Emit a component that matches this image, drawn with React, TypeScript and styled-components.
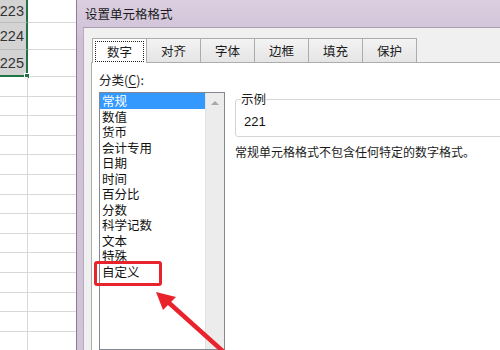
import React from "react";
import styled, { createGlobalStyle } from "styled-components";

const GlobalStyle = createGlobalStyle`
  html, body {
    margin: 0;
    padding: 0;
    background: #fff;
    overflow: hidden;
  }
  body {
    font-family: "Noto Sans CJK SC", "Noto Sans", sans-serif;
  }
`;

const Screen = styled.div`
  position: relative;
  display: flex;
  width: 500px;
  height: 350px;
  overflow: hidden;
  background: #fff;
`;

/* ---------- spreadsheet behind the dialog ---------- */

const Sheet = styled.div`
  width: 76px;
  flex-shrink: 0;
  display: flex;
  flex-direction: column;
`;

const SheetRow = styled.div<{ $h: number }>`
  display: flex;
  flex-shrink: 0;
  height: ${(p) => p.$h}px;
`;

const Cell = styled.div<{ $selected?: boolean; $last?: boolean }>`
  position: relative;
  box-sizing: border-box;
  width: 28px;
  display: flex;
  align-items: center;
  justify-content: flex-end;
  padding-right: 2px;
  font-family: "Liberation Sans", Arial, sans-serif;
  font-size: 14.5px;
  color: #333;
  background: ${(p) => (p.$selected ? "#d3d3d3" : "#fff")};
  border-right: ${(p) => (p.$selected ? "2px solid #217346" : "1px solid #d8d8d8")};
  border-bottom: ${(p) =>
    p.$last ? "2px solid #217346" : p.$selected ? "1px solid #bdbdbd" : "1px solid #d8d8d8"};
`;

const WideCell = styled.div`
  flex: 1;
  box-sizing: border-box;
  border-bottom: 1px solid #d8d8d8;
`;

const FillHandle = styled.span`
  position: absolute;
  right: -4px;
  bottom: -4px;
  width: 6px;
  height: 6px;
  background: #217346;
  border: 1px solid #fff;
  box-sizing: border-box;
`;

/* ---------- dialog ---------- */

const Dialog = styled.section`
  flex: 1;
  display: flex;
  flex-direction: column;
  background: linear-gradient(#dccfe1, #cfc0d6 40px, #d2c4d8);
  border-left: 1px solid #8c7d95;
`;

const TitleBar = styled.div`
  height: 27px;
  flex-shrink: 0;
  display: flex;
  align-items: center;
  padding-left: 8px;
  font-size: 12.5px;
  color: #1b1b1b;
`;

const Body = styled.div`
  flex: 1;
  display: flex;
  flex-direction: column;
  margin-left: 6px;
  padding: 10px 0 0 7px;
  background: #f0f0f0;
  border-top: 1px solid #a99dae;
  border-left: 1px solid #b6abbc;
`;

const TabStrip = styled.div`
  display: flex;
  align-items: flex-end;
  height: 24px;
  padding-left: 1px;
`;

const Tab = styled.div<{ $active?: boolean }>`
  position: relative;
  z-index: ${(p) => (p.$active ? 1 : 0)};
  box-sizing: border-box;
  width: 55px;
  height: ${(p) => (p.$active ? 25 : 24)}px;
  margin-right: -1px;
  margin-bottom: ${(p) => (p.$active ? -1 : 0)}px;
  display: flex;
  align-items: center;
  justify-content: center;
  border: 1px solid #acacac;
  border-bottom: none;
  background: ${(p) => (p.$active ? "#fff" : "linear-gradient(#f3f3f3, #e5e5e5)")};
  font-size: 12.5px;
  color: #1b1b1b;
`;

const FocusRing = styled.span`
  box-sizing: border-box;
  width: calc(100% - 4px);
  height: 21px;
  margin-top: 1px;
  display: flex;
  align-items: center;
  justify-content: center;
  border: 1px dotted #222;
`;

const Page = styled.div`
  flex: 1;
  display: flex;
  gap: 10px;
  padding: 9px 0 0 7px;
  background: #fff;
  border-top: 1px solid #acacac;
  border-left: 1px solid #acacac;
`;

const LeftCol = styled.div`
  width: 126px;
  flex-shrink: 0;
  display: flex;
  flex-direction: column;
`;

const Label = styled.div`
  height: 16px;
  line-height: 16px;
  margin-bottom: 4px;
  font-size: 12.5px;
  color: #1b1b1b;

  u {
    text-decoration: underline;
    text-underline-offset: 2px;
  }
`;

const ListBox = styled.div`
  flex: 1;
  display: flex;
  border: 1px solid #828790;
  background: #fff;
`;

const Items = styled.div`
  flex: 1;
  display: flex;
  flex-direction: column;
`;

const Item = styled.div<{ $selected?: boolean }>`
  height: 15.5px;
  line-height: 15.5px;
  padding-left: 2px;
  font-size: 12.5px;
  white-space: nowrap;
  color: ${(p) => (p.$selected ? "#fff" : "#111")};
  background: ${(p) => (p.$selected ? "#3399ff" : "transparent")};
`;

const ScrollTrack = styled.div`
  width: 18px;
  flex-shrink: 0;
  display: flex;
  flex-direction: column;
  align-items: center;
  background: #ececec;
  border-left: 1px solid #e2e2e2;
`;

const ScrollArrow = styled.span`
  margin-top: 8px;
  width: 0;
  height: 0;
  border-left: 4px solid transparent;
  border-right: 4px solid transparent;
  border-bottom: 4px solid #a8a8a8;
`;

const RightCol = styled.div`
  flex: 1;
  display: flex;
  flex-direction: column;
  margin-right: -30px;
`;

const Sample = styled.fieldset`
  margin: 19px 0 0 0;
  padding: 7px 5px 6px 5px;
  border: 1px solid #d5d5d5;
  border-radius: 3px;
  min-width: 0;

  legend {
    padding: 0;
    font-size: 12.5px;
    line-height: 16px;
    color: #1b1b1b;
  }
`;

const SampleValue = styled.div`
  height: 16px;
  line-height: 16px;
  margin-left: 3px;
  font-family: "Liberation Sans", Arial, sans-serif;
  font-size: 13px;
  color: #111;
`;

const Description = styled.div`
  margin-top: 7px;
  line-height: 16px;
  font-size: 12px;
  color: #1b1b1b;
  white-space: nowrap;
`;

/* ---------- red annotation on top ---------- */

const Mark = styled.div`
  position: absolute;
  left: 94px;
  top: 261px;
  width: 68px;
  height: 25px;
  box-sizing: border-box;
  border: 3px solid #e8232b;
  border-radius: 3px;
  pointer-events: none;
`;

const ArrowLayer = styled.svg`
  position: absolute;
  left: 0;
  top: 0;
  pointer-events: none;
`;

const categories = [
  "常规",
  "数值",
  "货币",
  "会计专用",
  "日期",
  "时间",
  "百分比",
  "分数",
  "科学记数",
  "文本",
  "特殊",
  "自定义",
];

const tabs = ["数字", "对齐", "字体", "边框", "填充", "保护"];

const sheetRows = [
  { h: 23, v: "223" },
  { h: 27, v: "224" },
  { h: 27, v: "225" },
  ...Array.from({ length: 14 }, () => ({ h: 19.6, v: "" })),
];

export default function App() {
  return (
    <Screen>
      <GlobalStyle />
      <Sheet>
        {sheetRows.map((r, i) => {
          const selected = r.v !== "";
          const last = i === 2;
          return (
            <SheetRow key={i} $h={r.h}>
              <Cell $selected={selected} $last={last}>
                {r.v}
                {last && <FillHandle />}
              </Cell>
              <WideCell />
            </SheetRow>
          );
        })}
      </Sheet>

      <Dialog>
        <TitleBar>设置单元格格式</TitleBar>
        <Body>
          <TabStrip>
            {tabs.map((t, i) => (
              <Tab key={t} $active={i === 0}>
                {i === 0 ? <FocusRing>{t}</FocusRing> : t}
              </Tab>
            ))}
          </TabStrip>
          <Page>
            <LeftCol>
              <Label>
                分类(<u>C</u>):
              </Label>
              <ListBox>
                <Items>
                  {categories.map((c, i) => (
                    <Item key={c} $selected={i === 0}>
                      {c}
                    </Item>
                  ))}
                </Items>
                <ScrollTrack>
                  <ScrollArrow />
                </ScrollTrack>
              </ListBox>
            </LeftCol>
            <RightCol>
              <Sample>
                <legend>示例</legend>
                <SampleValue>221</SampleValue>
              </Sample>
              <Description>常规单元格格式不包含任何特定的数字格式。</Description>
            </RightCol>
          </Page>
        </Body>
      </Dialog>

      <Mark />
      <ArrowLayer width="500" height="350" viewBox="0 0 500 350">
        <line x1="168" y1="302" x2="226" y2="354" stroke="#e8232b" strokeWidth="4.5" />
        <polygon points="156,292 176,297 163,310" fill="#e8232b" />
      </ArrowLayer>
    </Screen>
  );
}
